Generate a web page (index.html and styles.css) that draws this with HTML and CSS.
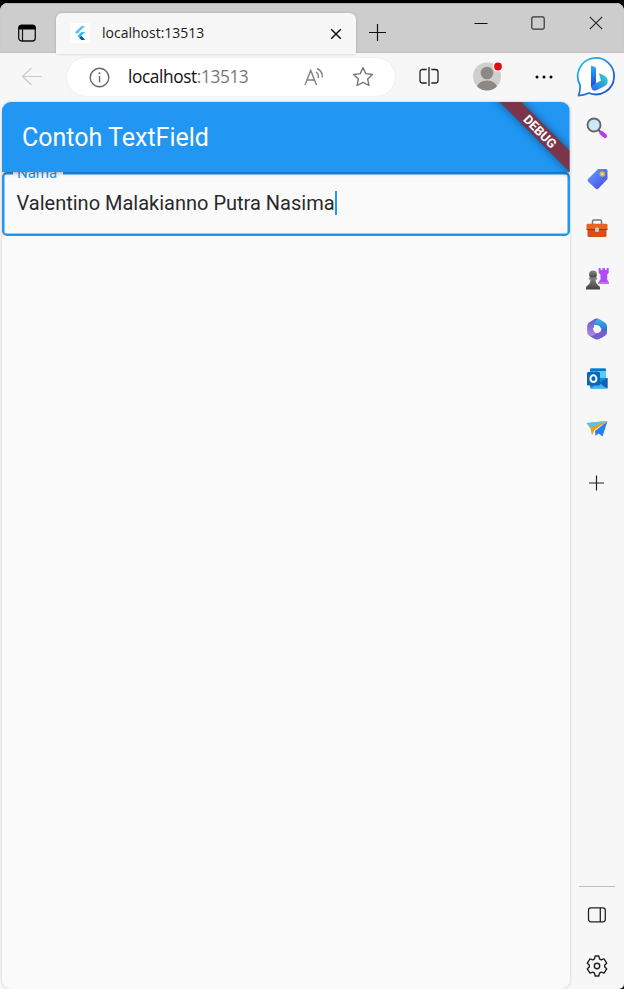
FILE: index.html
```html
<!DOCTYPE html>
<html lang="id">
<head>
<meta charset="utf-8">
<title>Contoh TextField</title>
<link rel="stylesheet" href="styles.css">
</head>
<body>
<div class="window">
  <header class="titlebar">
    <svg class="tab-actions" width="20" height="20" viewBox="0 0 20 20"><rect x="1.700" y="2.200" width="16.600" height="15.800" rx="3" fill="none" stroke="#111" stroke-width="1.300"/><path d="M1.500 6.500V5a3 3 0 0 1 3-3h11a3 3 0 0 1 3 3v1.500z" fill="#000"/><path d="M5.500 6v12" stroke="#111" stroke-width="1.200"/></svg>
    <div class="tab">
      <svg class="favicon" width="20" height="20" viewBox="0 0 20 20"><path fill="#fff" d="M0 0h20v20H0z"/><path d="M11.500 3H15L7 11 5 9.300z" fill="#54c5f8"/><path d="M11.500 9H15l-4 4 4 4h-3.500L7.500 13z" fill="#29b6f6"/><path d="M9.500 15l2-2 3.500 4h-3.500z" fill="#01579b"/></svg>
      <span class="tab-title">localhost:13513</span>
      <svg class="tab-close" width="12" height="12" viewBox="0 0 12 12"><path d="M1.200 1.200l9.600 9.600m0-9.600l-9.600 9.600" stroke="#111" stroke-width="1.500"/></svg>
    </div>
    <svg class="new-tab" width="18" height="18" viewBox="0 0 18 18"><path d="M8.500 0v17M0 8.500h17" stroke="#111" stroke-width="1.200"/></svg>
    <div class="controls">
      <svg width="14" height="14" viewBox="0 0 14 14"><path d="M.5 7.500h13" stroke="#111" stroke-width="1"/></svg>
      <svg width="14" height="14" viewBox="0 0 14 14"><rect x=".8" y=".8" width="12.400" height="12.400" rx="1.800" fill="none" stroke="#333" stroke-width="1.200"/></svg>
      <svg width="14" height="14" viewBox="0 0 14 14"><path d="M.8 .8l12.400 12.400m0-12.400L.8 13.200" stroke="#222" stroke-width="1.100"/></svg>
    </div>
  </header>
  <div class="body">
    <div class="main">
      <nav class="toolbar">
        <svg class="back" width="22" height="20" viewBox="0 0 22 20"><path d="M21 9.500H1.500M10.500 1L1.500 9.500l9 8.500" fill="none" stroke="#cbcbcb" stroke-width="1.200"/></svg>
        <div class="address">
          <svg class="info" width="22" height="22" viewBox="0 0 22 22"><circle cx="11.500" cy="10.500" r="9.300" fill="none" stroke="#666" stroke-width="1.400"/><path d="M11.500 9v6.300" stroke="#666" stroke-width="1.400"/><circle cx="11.500" cy="6.300" r="1" fill="#666"/></svg>
          <span class="url">localhost<span class="port">:13513</span></span>
          <svg class="read" width="20" height="20" viewBox="0 0 20 20"><g fill="none" stroke="#808080" stroke-width="1.400"><path d="M1 18L6.700 3.500l5.800 14.500M3 13h7.700M12 5q3 2 2.300 6M13 1.500q6 3 5.300 9"/></g></svg>
          <svg class="star" width="22" height="22" viewBox="0 0 22 22"><path d="M11 1.700l2.800 5.900 6.700.9-4.800 4.500 1.200 6.500L11 16.300l-5.900 3.200L6.300 13 1.500 8.500l6.700-.9z" fill="none" stroke="#777" stroke-width="1.400" stroke-linejoin="round"/></svg>
        </div>
        <svg class="split" width="20" height="20" viewBox="0 0 20 20"><path d="M7.700 2.500H3.500Q1 2.500 1 5v8.500Q1 16 3.500 16h4.200M12.300 2.500h4.200Q19 2.500 19 5v8.500Q19 16 16.500 16h-4.200M10 0v19" fill="none" stroke="#222" stroke-width="1.300"/></svg>
        <svg class="avatar" width="32" height="32" viewBox="0 0 32 32"><defs><clipPath id="face"><circle cx="15" cy="16.500" r="14"/></clipPath></defs><circle cx="15" cy="16.500" r="14" fill="#d1cfcd"/><g clip-path="url(#face)" fill="#8b8885"><circle cx="15" cy="13" r="6.300"/><ellipse cx="15" cy="27.500" rx="10" ry="7"/></g><circle cx="26" cy="6.500" r="5.200" fill="#f7f7f7"/><circle cx="26" cy="6.500" r="3.900" fill="#e00b0b"/></svg>
        <svg class="more" width="18" height="4" viewBox="0 0 18 4"><circle cx="2" cy="2" r="1.500"/><circle cx="9" cy="2" r="1.500"/><circle cx="16" cy="2" r="1.500"/></svg>
      </nav>
      <div class="page">
        <div class="appbar">
          <h1>Contoh TextField</h1>
          <div class="banner">DEBUG</div>
        </div>
        <div class="field">
          <span class="label">Nama</span>
          <span class="value">Valentino Malakianno Putra Nasima</span><span class="caret"></span>
        </div>
      </div>
    </div>
    <aside class="sidebar">
      <svg class="bing" width="42" height="42" viewBox="0 0 42 42"><defs><linearGradient id="ring" x1="0" y1="0" x2=".9" y2="1"><stop stop-color="#21cdee"/><stop offset=".5" stop-color="#2682e6"/><stop offset="1" stop-color="#174bd0"/></linearGradient><linearGradient id="b1" x1="0" y1="0" x2="0" y2="1"><stop stop-color="#28aef5"/><stop offset="1" stop-color="#1b49d7"/></linearGradient><linearGradient id="b2" x1="0" y1="1" x2="1" y2="0"><stop stop-color="#2468e8"/><stop offset="1" stop-color="#35d9d0"/></linearGradient></defs><path d="M2.500 38.500Q4.500 34 4 28A18.200 18.200 0 1 1 13 36Q8 38.500 2.500 38.500z" fill="#fff" stroke="url(#ring)" stroke-width="1.800" stroke-linejoin="round"/><path d="M15 8.500l4 1.500q1 .5 1 1.500V28l-5 2z" fill="url(#b1)"/><path d="M23 16l6 3q3.500 2.500 2.500 7-.8 2-3.500 3.500L21 33q-3 1.500-5-.5L15 29l10-5.500-1-3z" fill="url(#b2)"/></svg>
      <svg class="app" width="24" height="24" viewBox="0 0 24 24"><path d="M13.500 14l3 3" stroke="#555" stroke-width="2"/><path d="M16.500 17l3.500 3" stroke="#bd35ec" stroke-width="4.200" stroke-linecap="round"/><circle cx="9" cy="9" r="6.500" fill="#cbe9fa" stroke="#666" stroke-width="1.900"/></svg>
      <svg class="app" width="24" height="24" viewBox="0 0 24 24"><defs><linearGradient id="tg" x1="0" y1="0" x2="1" y2="1"><stop stop-color="#64a4fb"/><stop offset="1" stop-color="#4644e8"/></linearGradient></defs><path d="M13 2h8q1.500 0 1.500 1.500V12L13.500 21.500q-1.500 1.500-3 0L3 14.500q-1-1.500 0-2.500z" fill="url(#tg)"/><circle cx="17.300" cy="7" r="2" fill="#c7dcff" stroke="#e9b514" stroke-width="1.600"/></svg>
      <svg class="app" width="24" height="24" viewBox="0 0 24 24"><path d="M7.500 7V4.500q0-1.500 1.500-1.500h6q1.500 0 1.500 1.500V7" fill="none" stroke="#777" stroke-width="1.500"/><path d="M2.500 12h19v6.500q0 1.500-1.500 1.500H4q-1.500 0-1.500-1.500z" fill="#d94b18"/><path d="M1.500 8q0-1.300 1.500-1.300h18q1.500 0 1.500 1.300v4.500h-21z" fill="#e5651e"/><path d="M1.500 12.500h21" stroke="#a83210"/><rect x="10" y="10.500" width="4" height="4.500" rx="1" fill="#bfc8cd"/></svg>
      <svg class="app" width="24" height="24" viewBox="0 0 24 24"><defs><linearGradient id="pw" x1="0" y1="0" x2="0" y2="1"><stop stop-color="#858585"/><stop offset="1" stop-color="#414141"/></linearGradient></defs><path d="M13.700 1h2v2h1.800V1h2.400v2h1.800V1H23.700v5l-1.500 1.500v5l1.500 2.500v2H13.500v-2l2-2.500v-5L13.700 6z" fill="#b14bf5"/><path d="M13.500 15h10.200v2H13.500z" fill="#cb69fa"/><circle cx="8" cy="7.500" r="3.900" fill="url(#pw)"/><path d="M4 10.500h8v2h-1.500q0 3.500 2.500 5.700 2 .5 2 2.500v1.800H1v-1.800q0-2 2-2.500 2.500-2.200 2.500-5.700H4z" fill="url(#pw)"/></svg>
      <svg class="app" width="24" height="24" viewBox="0 0 24 24"><defs><linearGradient id="m1" x1="0" y1="0" x2="0" y2="1"><stop stop-color="#3bb7ec"/><stop offset="1" stop-color="#2b45ba"/></linearGradient><linearGradient id="m2" x1="0" y1="0" x2="0" y2="1"><stop stop-color="#6154cb"/><stop offset="1" stop-color="#b891e9"/></linearGradient></defs><path d="M9 2.500q3-2 6 0l5 3Q22 7 22 9v6q0 2-2 3.500L16 21v-8l-4-5H7z" fill="url(#m1)"/><path d="M9 2.500L4 5.500Q2.200 7 2.200 9v6q0 2 1.800 3.500L9 21.500l4-4.500-4-3V8q0-4 4-6.500-2 0-4 1z" fill="url(#m2)"/><path d="M4 18.500q3 1 5-.5l7-4h6q0 3-2 4.500l-5 3q-3 1.800-6 0z" fill="#775bd0"/><path d="M10 8.500h4l2.500 3.500-2.500 3.800h-4L7.800 12z" fill="#f7f7f7"/></svg>
      <svg class="app" width="24" height="24" viewBox="0 0 24 24"><path d="M6 1.500h14q1 0 1 1V12H5V2.500q0-1 1-1z" fill="#28a8ea"/><path d="M6 1.500h14q1 0 1 1V4H5V2.500q0-1 1-1z" fill="#0a76c7"/><path d="M13 4h8v7h-8z" fill="#55cdfb"/><path d="M5 11h17.500v9q0 1.500-1.500 1.500H6.500Q5 21.500 5 20z" fill="#1687d8"/><path d="M22.500 11L14 16l8.500 5.500z" fill="#1064af"/><path d="M5 21.500l9-5.500 8 5.500z" fill="#35b8f1"/><rect x="2" y="5" width="13" height="13.500" rx="1.300" fill="#0868bf"/><ellipse cx="8.400" cy="11.700" rx="3" ry="3.400" fill="none" stroke="#fff" stroke-width="2"/></svg>
      <svg class="app" width="24" height="24" viewBox="0 0 24 24"><path d="M10 14L22.500 4 17.500 19.500l-4-3-3 2.500z" fill="#2a80ea"/><path d="M1.500 6L22.500 4 9.500 13l-2.500 5.500-1.500-7z" fill="#ed9e16"/><path d="M1.500 6L22.500 4 5.500 10.500z" fill="#51c4f4"/></svg>
      <svg class="add" width="16" height="16" viewBox="0 0 16 16"><path d="M7.500 .5v15M0 8h15" stroke="#222" stroke-width="1.200"/></svg>
      <div class="rule"></div>
      <svg class="panel" width="20" height="18" viewBox="0 0 20 18"><rect x="1.500" y="1.800" width="16.800" height="14" rx="2.500" fill="none" stroke="#222" stroke-width="1.300"/><path d="M13.300 2v14" stroke="#222" stroke-width="1.300"/></svg>
      <svg class="gear" width="22" height="22" viewBox="0 0 22 22"><g fill="none" stroke="#222" stroke-width="1.400" stroke-linejoin="round"><path d="M9.200 1h3.600l.7 2.800 1.700 1 2.800-.9 2.700 4.300L18.700 10v2l2 1.800-2.700 4.300-2.800-.9-1.700 1-.7 2.800H9.200l-.7-2.800-1.700-1-2.800.9-2.700-4.300 2-1.800v-2l-2-1.800L4 3.900l2.800.9 1.700-1z"/><circle cx="11" cy="11" r="2.700"/></g></svg>
    </aside>
  </div>
</div>
</body>
</html>
```
FILE: styles.css
```css
* { box-sizing: border-box; }
body { margin: 0; padding-top: 3px; height: 989px; overflow: hidden; background: #000; }
svg { display: block; flex: none; }
.window { height: 986px; display: flex; flex-direction: column; background: #f7f7f7; border-radius: 8px 8px 5px 0; overflow: hidden; font-family: "Open Sans", "Noto Sans", sans-serif; }
.titlebar { height: 50px; flex: none; display: flex; background: #cdcdcd; border-top: 1px solid #b5b5b5; box-shadow: inset 0 -1px 1px #c0c0c0; }
.tab-actions { margin: 19px 0 0 17px; }
.tab { width: 300px; height: 41px; margin: 9px 0 0 19px; padding-left: 14px; display: flex; align-items: center; background: #f7f7f7; border-radius: 6px 6px 0 0; box-shadow: 0 0 3px rgba(0,0,0,.2); }
.favicon { margin-top: -1px; }
.tab-title { width: 103px; margin: -2px 0 0 12px; font-size: 14px; color: #1b1b1b; white-space: nowrap; }
.tab-close { margin-left: 125px; }
.new-tab { margin: 20px 0 0 13px; }
.controls { display: flex; gap: 43.500px; margin: 11.500px 0 0 86.500px; }
.body { flex: 1; display: flex; }
.main { width: 570px; display: flex; flex-direction: column; }
.toolbar { height: 49px; display: flex; align-items: center; padding: 0 0 1px 21px; }
.address { width: 328px; height: 38px; margin-left: 24px; padding-left: 21px; display: flex; align-items: center; background: #fff; border-radius: 19px; box-shadow: 0 0 3px rgba(0,0,0,.07); }
.info { margin-top: 1px; }
.url { width: 121px; margin: -1px 0 0 18px; font-size: 17.300px; letter-spacing: -.4px; color: #111; white-space: nowrap; }
.port { color: #777; }
.read { margin-left: 55px; }
.star { margin-left: 28px; }
.split { margin-left: 24px; }
.avatar { margin: -2px 0 0 33px; }
.more { margin-left: 31px; }
.page { width: 567.500px; height: 887px; margin-left: 2px; background: #fafafa; border-radius: 9px; overflow: hidden; box-shadow: 0 0 3px rgba(0,0,0,.2); font-family: Roboto, sans-serif; }
.appbar { position: relative; z-index: 2; height: 70px; padding-left: 20px; display: flex; align-items: center; background: #2196f3; box-shadow: 0 1px 4px rgba(0,0,0,.35); clip-path: inset(0 0 -8px 0); }
.appbar h1 { margin: 0; font-size: 25px; font-weight: 400; color: #fff; white-space: nowrap; }
.banner { position: absolute; left: 478px; top: 22px; width: 120px; height: 15px; line-height: 15px; transform: rotate(45deg); text-align: center; background: #7b344a; box-shadow: 0 0 8px rgba(0,0,0,.45); color: #fff; font-size: 12.800px; font-weight: 700; }
.field { position: relative; height: 64px; padding: 0 12px 3px 12.500px; display: flex; align-items: center; border: 2px solid #2196f3; border-radius: 5px; box-shadow: inset 0 0 0 .5px #2196f3; }
.label { position: absolute; left: 9px; top: -10px; padding: 0 6px 0 4px; background: #fafafa; color: #2196f3; font-size: 15px; line-height: 18px; }
.value { font-size: 20px; color: #2a2a2a; white-space: nowrap; }
.caret { width: 2.500px; height: 24px; background: #2196f3; }
.sidebar { width: 54px; display: flex; flex-direction: column; align-items: center; padding-top: 4px; }
.bing { margin-bottom: 17px; }
.app { margin-bottom: 26px; }
.bing + .app { margin-bottom: 27px; }
.add { margin-top: 8px; }
.rule { width: 36px; height: 1px; margin-top: auto; background: #bdbdbd; }
.panel { margin-top: 19px; }
.gear { margin: 31px 0 12px; }
```
